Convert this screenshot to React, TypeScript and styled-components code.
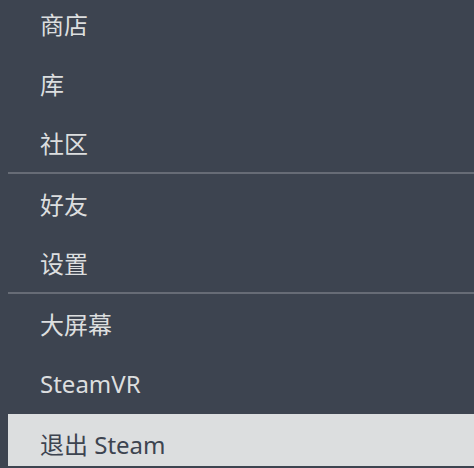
import React from "react";
import styled, { createGlobalStyle } from "styled-components";

const Global = createGlobalStyle`
  html, body { margin: 0; padding: 0; background: #3d4450; overflow: hidden; }
  * { box-sizing: border-box; }
`;

const Panel = styled.div`
  height: 466px;
  overflow: hidden;
  padding-left: 8px;
  background: #3d4450;
`;

const List = styled.ul`
  list-style: none;
  margin: -6px 0 0 0;
  padding: 0;
  display: flex;
  flex-direction: column;
`;

const Item = styled.li<{ $sep?: boolean; $active?: boolean }>`
  height: 60px;
  display: flex;
  align-items: center;
  padding: 0 0 2px 32px;
  font-family: "Noto Sans", "Noto Sans CJK SC", sans-serif;
  font-size: 24px;
  color: ${(p) => (p.$active ? "#3d4450" : "#dcdedf")};
  background: ${(p) => (p.$active ? "#dcdedf" : "transparent")};
  border-bottom: ${(p) => (p.$sep ? "2px solid #676c76" : "none")};
  white-space: nowrap;
`;

const items: { label: string; sep?: boolean; active?: boolean }[] = [
  { label: "商店" },
  { label: "库" },
  { label: "社区", sep: true },
  { label: "好友" },
  { label: "设置", sep: true },
  { label: "大屏幕" },
  { label: "SteamVR" },
  { label: "退出 Steam", active: true },
];

export default function App() {
  return (
    <>
      <Global />
      <Panel>
        <List>
          {items.map((it) => (
            <Item key={it.label} $sep={it.sep} $active={it.active}>
              {it.label}
            </Item>
          ))}
        </List>
      </Panel>
    </>
  );
}
